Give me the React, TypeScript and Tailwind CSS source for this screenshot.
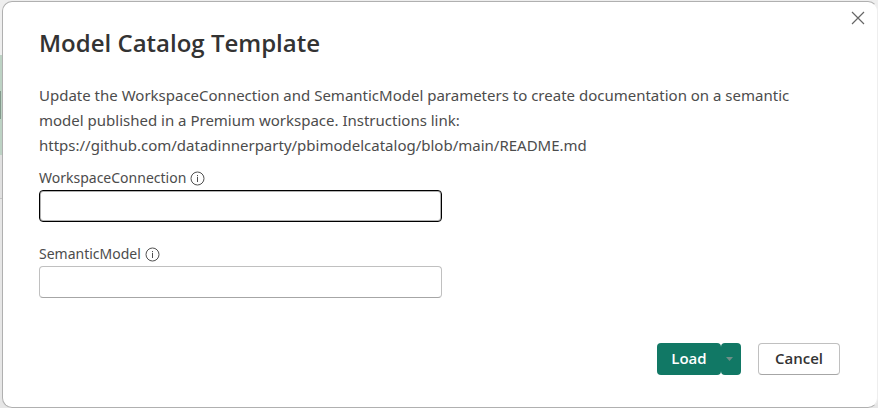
import { useState } from "react";

function InfoIcon() {
  return (
    <svg width="15" height="15" viewBox="0 0 15 15" fill="none" stroke="#505050" aria-hidden="true">
      <circle cx="7.5" cy="7.5" r="6.5" />
      <path d="M7.5 6V11M7.5 4V5.2" />
    </svg>
  );
}

function ParameterField({ id, label, autoFocus }: { id: string; label: string; autoFocus?: boolean }) {
  const [value, setValue] = useState("");
  return (
    <div>
      <div className="flex h-6 items-center gap-1">
        <label htmlFor={id} className="font-['Noto_Sans',sans-serif] text-[14px] leading-6 text-[#4c4c4c]">
          {label}
        </label>
        <InfoIcon />
      </div>
      <input
        id={id}
        type="text"
        value={value}
        autoFocus={autoFocus}
        onChange={(e) => setValue(e.target.value)}
        className="block h-8 w-full rounded border border-[#c0c0c0] border-b-[#a6a6a6] bg-white px-2 text-sm text-[#333333] caret-transparent outline-none focus:border-black focus:ring-1 focus:ring-inset focus:ring-black/30"
      />
    </div>
  );
}

export default function App() {
  return (
    <div className="relative min-h-screen overflow-hidden bg-[#eeeeee] font-['Open_Sans','Noto_Sans',sans-serif]">
      <div className="absolute inset-0 flex flex-col pt-[55px]" aria-hidden="true">
        <div className="h-[100px] bg-[#bdd2c4] pt-9">
          <div className="h-7 w-px bg-[#82998b]" />
        </div>
        <div className="h-11 border-b border-[#c4c4c4] bg-[#e0e0e0]" />
        <div className="flex-1 bg-[#e6e6e6]" />
      </div>

      <main className="relative flex min-h-screen flex-col pt-px pl-[2px]">
        <section
          role="dialog"
          aria-labelledby="dialog-title"
          className="flex flex-1 flex-col rounded-[10px] border border-[#b0b0b0] border-r-[#eeeeee] bg-white pr-[37px] pb-8 pl-9"
        >
          <header className="flex items-start justify-between">
            <h1 id="dialog-title" className="pt-[25px] text-[24px] leading-8 font-semibold text-[#333333]">
              Model Catalog Template
            </h1>
            <button type="button" aria-label="Close" className="-mr-[30px] mt-1 flex size-6 items-center justify-center">
              <svg width="14" height="14" viewBox="0 0 14 14" fill="none" stroke="#666666" strokeWidth="1.2">
                <path d="M1 1L13 13M13 1L1 13" />
              </svg>
            </button>
          </header>

          <p className="mt-6 max-w-[780px] font-['Noto_Sans',sans-serif] text-[15px] leading-[25px] text-[#4c4c4c]">
            Update the WorkspaceConnection and SemanticModel parameters to create documentation on a semantic
            model published in a Premium workspace. Instructions link:
            <br />
            https://github.com/datadinnerparty/pbimodelcatalog/blob/main/README.md
          </p>

          <form className="mt-2 flex max-w-[403px] flex-col gap-5">
            <ParameterField id="workspace-connection" label="WorkspaceConnection" autoFocus />
            <ParameterField id="semantic-model" label="SemanticModel" />
          </form>

          <footer className="mt-auto flex h-8 justify-end">
            <button
              type="button"
              className="w-16 rounded bg-[#117865] pb-px text-[15px] font-semibold text-white"
            >
              Load
            </button>
            <button
              type="button"
              aria-label="More load options"
              className="flex w-5 items-center justify-center rounded bg-[#117865] pr-1"
            >
              <svg width="7" height="4" viewBox="0 0 7 4" fill="#6f8f87" aria-hidden="true">
                <path d="M0 0H7L3.5 4Z" />
              </svg>
            </button>
            <button
              type="button"
              className="ml-[17px] w-[82px] rounded border border-[#c0c0c0] border-b-[#a6a6a6] bg-white pb-px text-[15px] font-semibold text-[#333333]"
            >
              Cancel
            </button>
          </footer>
        </section>
      </main>
    </div>
  );
}
